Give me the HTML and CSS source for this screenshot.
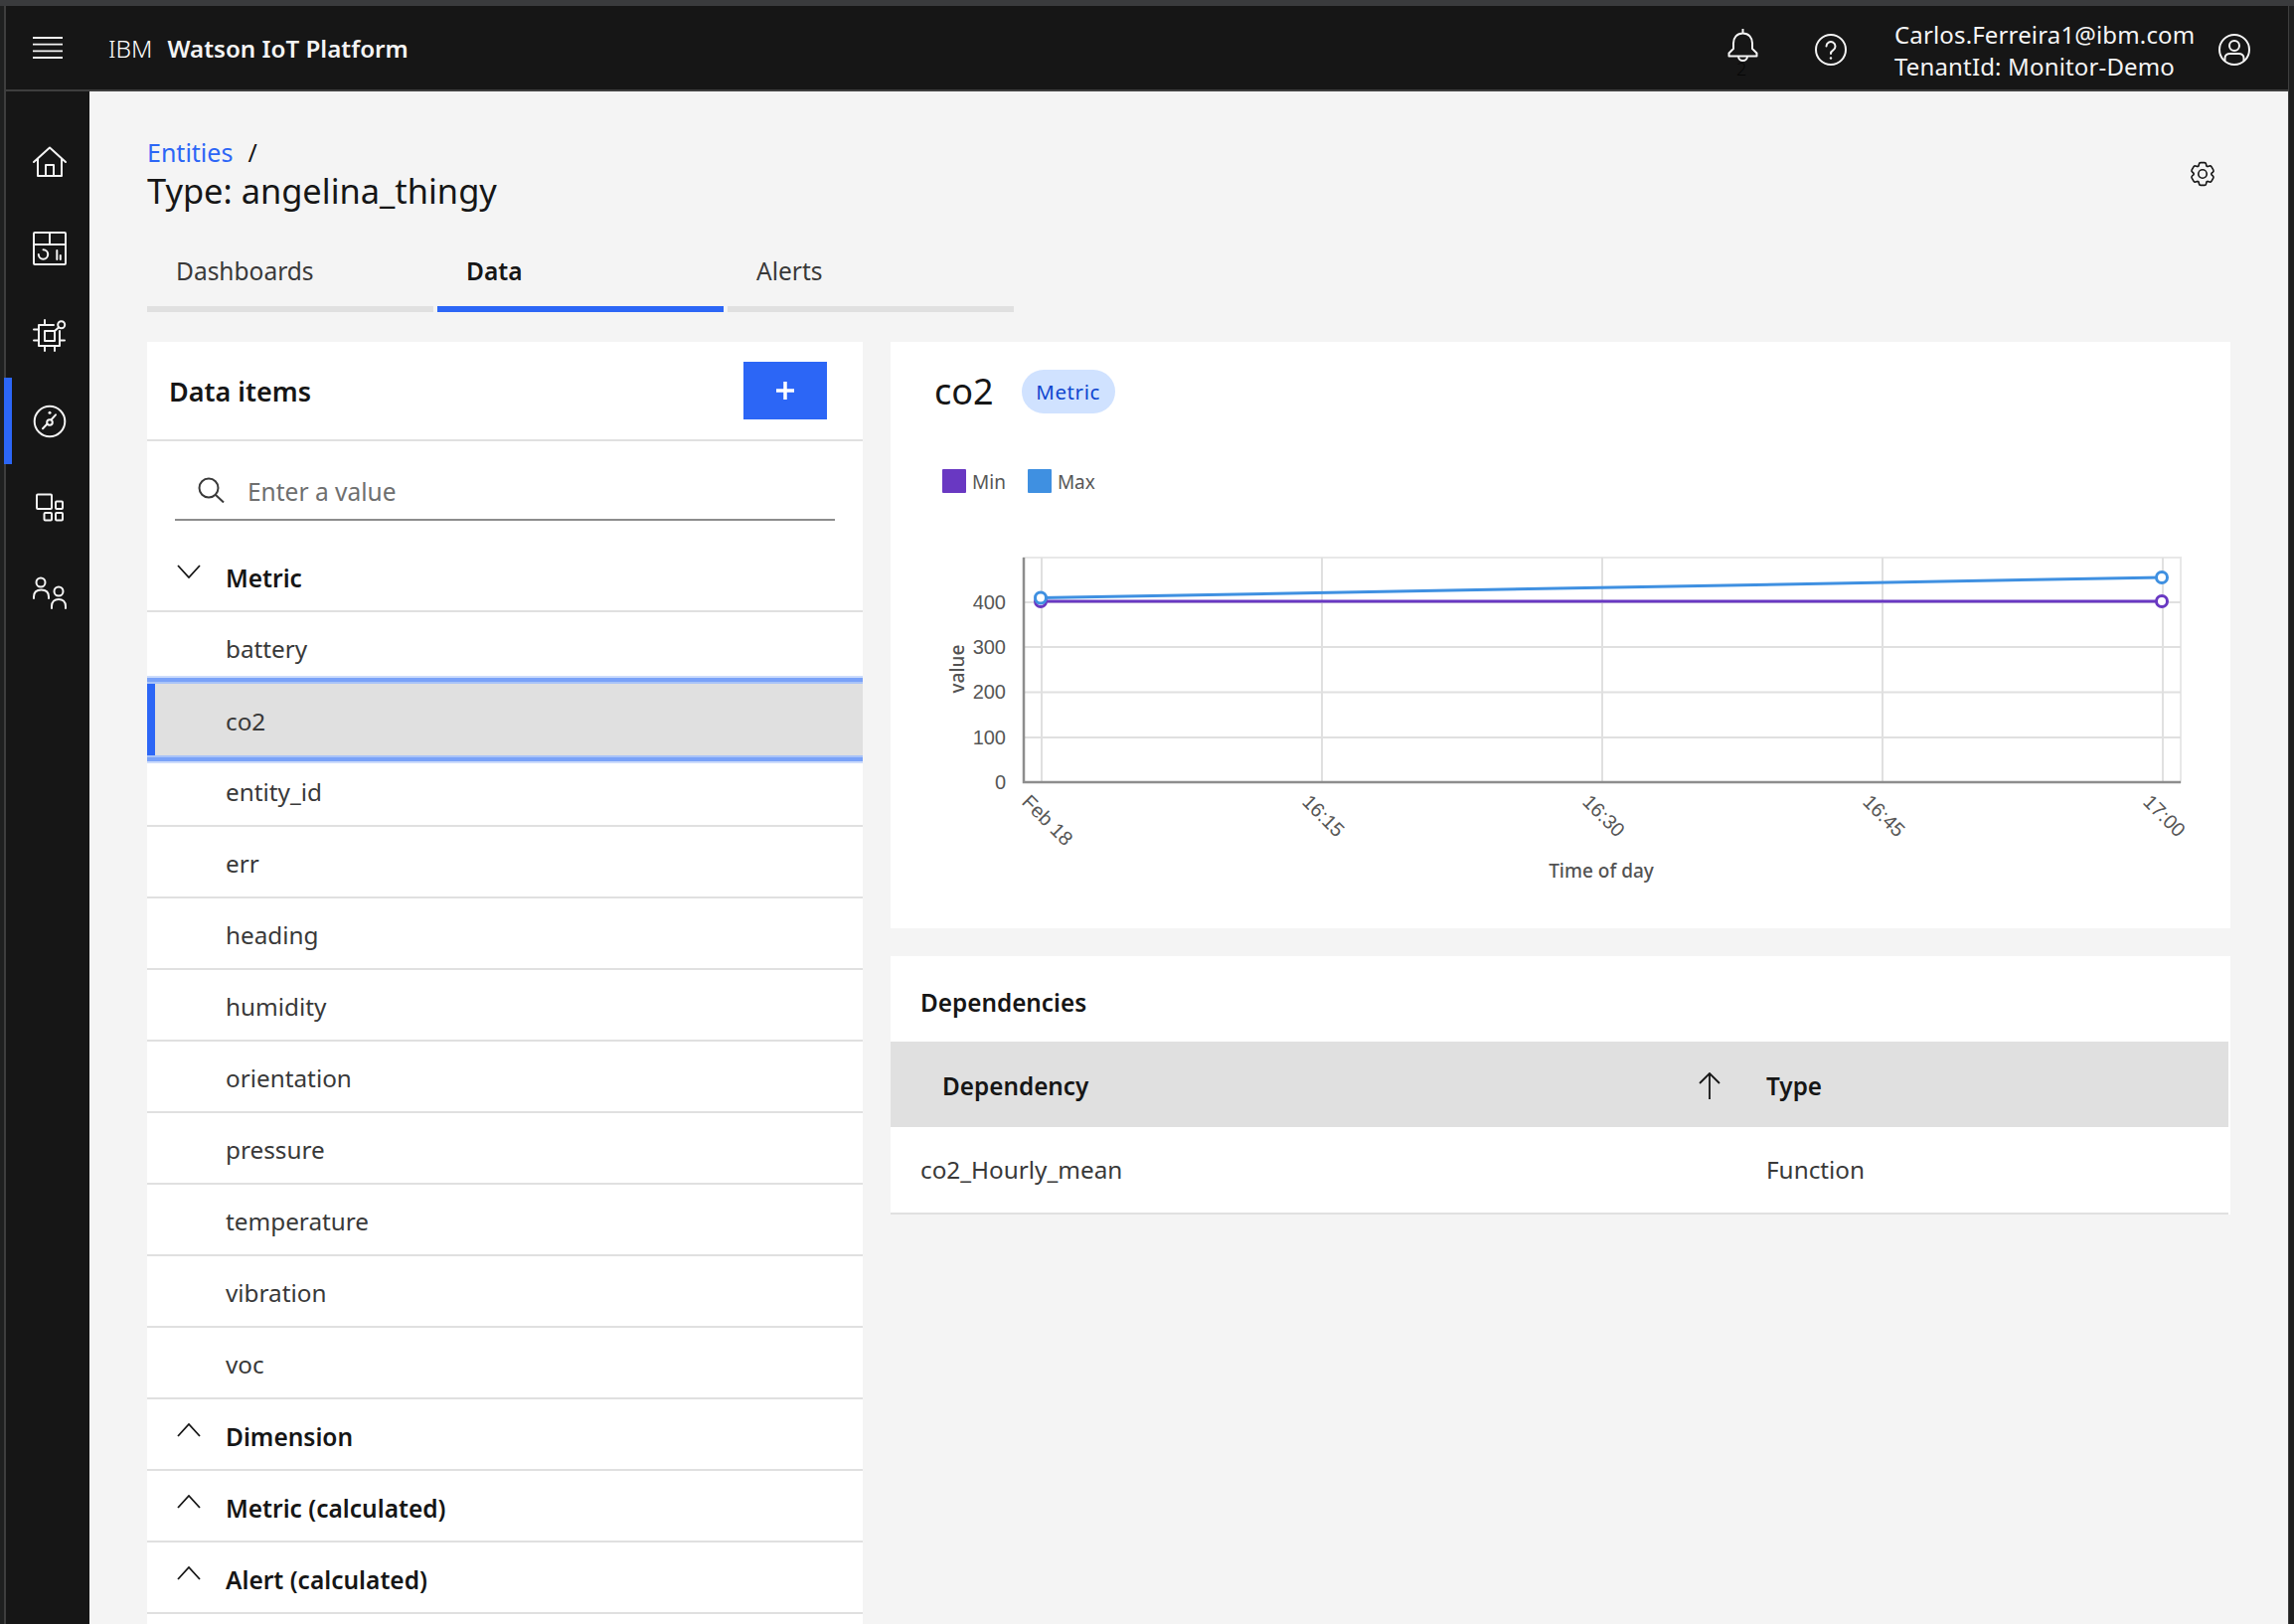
FILE: index.html
```html
<!DOCTYPE html>
<html lang="en">
<head>
<meta charset="utf-8">
<title>IBM Watson IoT Platform</title>
<link rel="stylesheet" href="styles.css">
</head>
<body>
<div class="top-strip"></div>
<div class="shell">
  <header class="header">
    <button class="hamburger" aria-label="Menu">
      <svg viewBox="0 0 30 22" width="30" height="22" class="ico thin"><path d="M0 1H30M0 7.7H30M0 14.3H30M0 21H30"/></svg>
    </button>
    <div class="brand"><span class="brand-ibm">IBM</span><span class="brand-name">Watson IoT Platform</span></div>
    <div class="header-right">
      <div class="bell">
        <svg viewBox="0 0 32 34" width="32" height="34" class="ico"><path d="M15.5 0.5V4.5M15.5 4.5C9.5 4.5 6 9 6 14.5V20L1.5 24.5V27.5H29.5V24.5L25 20V14.5C25 9 21.5 4.5 15.5 4.5ZM11 27.5A4.5 4.5 0 0 0 20 27.5"/></svg>
        <span class="bell-count">2</span>
      </div>
      <svg viewBox="0 0 32 32" width="32" height="32" class="ico help"><circle cx="16" cy="16" r="15"/><path d="M11.5 12.5A4.5 4.5 0 1 1 18.4 16.4C16.8 17.4 16 18.2 16 20"/><circle cx="16" cy="24.5" r="1.2" class="dot"/></svg>
      <div class="user-text"><div>Carlos.Ferreira1@ibm.com</div><div>TenantId: Monitor-Demo</div></div>
      <svg viewBox="0 0 32 32" width="32" height="32" class="ico avatar"><circle cx="16" cy="16" r="15"/><circle cx="16" cy="12" r="5"/><path d="M6.5 27V24.5C6.5 21.5 9 20 11.5 20H20.5C23 20 25.500 21.500 25.500 24.500V27"/></svg>
    </div>
  </header>
  <div class="body-row">
    <nav class="sidebar">
      <a class="nav-item"><svg viewBox="0 0 34 34" width="34" height="34" class="ico"><path d="M1 17L17 2.500L33 17M5 14V31H29V14M13 31V20H21V31"/></svg></a>
      <a class="nav-item"><svg viewBox="0 0 34 34" width="34" height="34" class="ico"><rect x="1" y="1" width="32" height="32" rx="1"/><path d="M1 13H33M17 1V13M10.500 18.300A4.700 4.700 0 1 1 5.800 23M24.300 19V28M27.800 24V28"/></svg></a>
      <a class="nav-item"><svg viewBox="0 0 34 34" width="34" height="34" class="ico chip"><path d="M21 6H6V27H27V12M12 12H22V22H12ZM1 10.500H6M1 21.500H6M12 1V6M12 27V32M22 27V32M27 21.500H32M22 12L26.200 8.200"/><circle cx="28.700" cy="5.700" r="3.500"/></svg></a>
      <a class="nav-item active"><svg viewBox="0 0 34 34" width="34" height="34" class="ico"><circle cx="17" cy="17" r="15.300"/><path d="M10 24.300L14.500 19.500M18.800 15L23 10.300"/><circle cx="17" cy="18" r="2.800"/><circle cx="17" cy="8.300" r="1.500" class="dot"/></svg></a>
      <a class="nav-item"><svg viewBox="0 0 34 34" width="34" height="34" class="ico"><rect x="4" y="3.500" width="15" height="14.500" rx="1"/><rect x="23" y="10.500" width="7" height="7.500" rx="1"/><rect x="11.500" y="22" width="7.500" height="7.500" rx="1"/><rect x="23" y="22" width="7" height="7.500" rx="1"/></svg></a>
      <a class="nav-item"><svg viewBox="0 0 34 34" width="34" height="34" class="ico users"><circle cx="8" cy="6" r="4.500"/><path d="M1 22V20.500C1 16 4 13.500 8.500 13.500C13 13.500 16 16 16 20.500V22"/><circle cx="26" cy="15" r="4.500"/><path d="M19 32V30C19 25.500 22 23 26 23C30 23 33 25.500 33 30V32"/></svg></a>
    </nav>
    <main class="content">
      <div class="page-head">
        <div>
          <div class="breadcrumb"><a class="crumb-link">Entities</a><span class="crumb-sep">/</span></div>
          <h1 class="page-title">Type: angelina_thingy</h1>
        </div>
        <svg viewBox="0 0 32 32" width="26" height="26" class="gear"><path d="M27 16.76V15.24l1.92-1.68A2 2 0 0 0 29.3 11l-2.36-4a2 2 0 0 0-1.73-1 2 2 0 0 0-.64.1l-2.43.82a11.35 11.35 0 0 0-1.31-.75l-.51-2.52a2 2 0 0 0-2-1.61h-4.68a2 2 0 0 0-2 1.61l-.51 2.52a11.48 11.48 0 0 0-1.32.75l-2.38-.86A2 2 0 0 0 6.79 6a2 2 0 0 0-1.73 1L2.7 11a2 2 0 0 0 .41 2.51L5 15.24v1.52l-1.89 1.68A2 2 0 0 0 2.7 21l2.36 4a2 2 0 0 0 1.73 1 2 2 0 0 0 .64-.1l2.43-.82a11.35 11.35 0 0 0 1.31.75l.51 2.52a2 2 0 0 0 2 1.61h4.72a2 2 0 0 0 2-1.61l.51-2.52a11.48 11.48 0 0 0 1.32-.75l2.42.82a2 2 0 0 0 .64.1 2 2 0 0 0 1.73-1l2.28-4a2 2 0 0 0-.41-2.51z"/><circle cx="16" cy="16" r="5.2"/></svg>
      </div>
      <div class="tabs">
        <a class="tab">Dashboards</a>
        <a class="tab selected">Data</a>
        <a class="tab">Alerts</a>
      </div>
      <div class="panels">
        <section class="items-panel">
          <div class="items-head">
            <h2 class="items-title">Data items</h2>
            <button class="add-btn" aria-label="Add"><svg viewBox="0 0 20 20" width="20" height="20" class="plus"><path d="M10 1V19M1 10H19"/></svg></button>
          </div>
          <div class="search-wrap">
            <div class="search">
              <svg viewBox="0 0 28 26" width="28" height="26" class="search-ico"><circle cx="11" cy="11" r="9.500"/><path d="M18 18L26 25.500"/></svg>
              <span class="placeholder">Enter a value</span>
            </div>
          </div>
          <ul class="tree">
            <li class="row group"><svg viewBox="0 0 24 14" width="24" height="14" class="chev"><path d="M1 1L12 13L23 1"/></svg><span>Metric</span></li>
            <li class="row">battery</li>
            <li class="row current">co2</li>
            <li class="row">entity_id</li>
            <li class="row">err</li>
            <li class="row">heading</li>
            <li class="row">humidity</li>
            <li class="row">orientation</li>
            <li class="row">pressure</li>
            <li class="row">temperature</li>
            <li class="row">vibration</li>
            <li class="row">voc</li>
            <li class="row group"><svg viewBox="0 0 24 14" width="24" height="14" class="chev"><path d="M1 13L12 1L23 13"/></svg><span>Dimension</span></li>
            <li class="row group"><svg viewBox="0 0 24 14" width="24" height="14" class="chev"><path d="M1 13L12 1L23 13"/></svg><span>Metric (calculated)</span></li>
            <li class="row group"><svg viewBox="0 0 24 14" width="24" height="14" class="chev"><path d="M1 13L12 1L23 13"/></svg><span>Alert (calculated)</span></li>
          </ul>
        </section>
        <div class="detail">
          <section class="chart-card">
            <div class="chart-head">
              <span class="chart-title">co2</span>
              <span class="tag">Metric</span>
            </div>
            <div class="legend">
              <span class="swatch min"></span><span class="legend-label">Min</span>
              <span class="swatch max"></span><span class="legend-label">Max</span>
            </div>
            <svg class="chart" viewBox="896 540 1348 394" width="1348" height="394">
              <rect x="1030" y="561" width="1164" height="226" class="frame"/>
              <path class="grid" d="M1030 606H2194M1030 651H2194M1030 696.500H2194M1030 742H2194M1048 561V787M1330 561V787M1612 561V787M1894 561V787M2176 561V787"/>
              <path class="axis" d="M1030 561V787H2194"/>
              <g class="ytick">
                <text x="1012" y="613">400</text>
                <text x="1012" y="658">300</text>
                <text x="1012" y="703">200</text>
                <text x="1012" y="749">100</text>
                <text x="1012" y="794">0</text>
              </g>
              <text class="axis-title" transform="translate(970,673) rotate(-90)">value</text>
              <g class="xtick">
                <text transform="translate(1027,808) rotate(45)">Feb 18</text>
                <text transform="translate(1309,808) rotate(45)">16:15</text>
                <text transform="translate(1591,808) rotate(45)">16:30</text>
                <text transform="translate(1873,808) rotate(45)">16:45</text>
                <text transform="translate(2155,808) rotate(45)">17:00</text>
              </g>
              <text class="axis-title" x="1611" y="883">Time of day</text>
              <path class="line-min" d="M1047 605H2175"/>
              <circle class="pt-min" cx="1047" cy="605" r="5.500"/>
              <circle class="pt-min" cx="2175" cy="605" r="5.500"/>
              <path class="line-max" d="M1047 601.500L2175 581"/>
              <circle class="pt-max" cx="1047" cy="601.500" r="5.500"/>
              <circle class="pt-max" cx="2175" cy="581" r="5.500"/>
            </svg>
          </section>
          <section class="deps-card">
            <h3 class="deps-title">Dependencies</h3>
            <table class="deps-table">
              <thead>
                <tr>
                  <th class="col-dep"><div class="th-inner"><span>Dependency</span><svg viewBox="0 0 22 28" width="22" height="28" class="sort"><path d="M11 27V1M1 11L11 1L21 11"/></svg></div></th>
                  <th class="col-type">Type</th>
                </tr>
              </thead>
              <tbody>
                <tr><td>co2_Hourly_mean</td><td>Function</td></tr>
              </tbody>
            </table>
          </section>
        </div>
      </div>
    </main>
  </div>
</div>
</body>
</html>
```
FILE: styles.css
```css
* { box-sizing: border-box; }
html, body { margin: 0; padding: 0; }
body {
  width: 2308px;
  height: 1634px;
  overflow: hidden;
  background: #1f2020;
  font-family: "Noto Sans", "Open Sans", sans-serif;
  color: #161616;
  display: flex;
  flex-direction: column;
}
.top-strip { height: 6px; flex: none; background: #3a3b3d; }
.shell {
  flex: 1;
  min-height: 0;
  margin: 0 6px 0 4px;
  display: flex;
  flex-direction: column;
  box-shadow: 1px 0 0 #3e3e3e;
}
.ico { fill: none; stroke: #f4f4f4; stroke-width: 2; stroke-linecap: round; stroke-linejoin: round; flex: none; display: block; }
.ico.thin { stroke-width: 1.8; stroke-linecap: butt; }
.ico .dot { fill: #f4f4f4; stroke: none; }
.ico.chip { margin-top: 2px; }
.ico.users { margin-top: -2px; }

/* header */
.header {
  height: 86px;
  flex: none;
  background: #161616;
  border-bottom: 2px solid #3e3e3e;
  box-shadow: inset 2px 0 0 #3e3e3e;
  display: flex;
  align-items: center;
  color: #f4f4f4;
}
.hamburger { background: none; border: 0; padding: 0; margin: 0 0 0 29px; display: block; }
.brand { margin-left: 46px; font-size: 24.500px; display: flex; align-items: baseline; }
.brand-ibm { font-weight: 300; margin-right: 15px; color: #fff; }
.brand-name { font-weight: 600; font-size: 24.200px; }
.header-right { margin-left: auto; display: flex; align-items: center; padding-right: 38px; }
.bell { position: relative; width: 32px; height: 34px; margin-top: -4px; }
.bell-count { position: absolute; left: 9px; top: 28px; font-size: 18px; color: #080808; font-weight: 300; }
.help { margin-left: 56px; margin-top: 4px; }
.avatar { margin-top: 4px; }
.user-text { margin-left: 48px; margin-right: 25px; margin-top: 6px; font-size: 24px; line-height: 32px; font-weight: 400; width: 301px; white-space: nowrap; letter-spacing: 0.15px; color: #f4f4f4; }

/* layout */
.body-row { flex: 1; min-height: 0; display: flex; }
.sidebar {
  width: 86px;
  flex: none;
  background: #161616;
  box-shadow: inset 2px 0 0 #3e3e3e;
  padding-top: 27px;
}
.nav-item { display: flex; align-items: center; height: 87px; padding-left: 21px; border-left: 8px solid transparent; }
.nav-item.active { border-left-color: #2c66f6; }
.content { flex: 1; min-width: 0; background: #f4f4f4; padding: 0 58px; display: flex; flex-direction: column; }

.page-head { display: flex; justify-content: space-between; align-items: flex-start; height: 122px; padding-top: 44px; }
.breadcrumb { font-size: 25px; line-height: 34px; display: flex; }
.crumb-link { color: #2c66f6; }
.crumb-sep { margin-left: 15px; color: #161616; }
.page-title { margin: 0; font-size: 34.400px; line-height: 44px; font-weight: 400; color: #161616; }
.gear { fill: none; stroke: #161616; stroke-width: 2; margin: 26px 15px 0 0; display: block; }

.tabs { display: flex; gap: 4px; height: 100px; flex: none; }
.tab { width: 288px; height: 100px; border-bottom: 6px solid #e0e0e0; padding: 42px 0 0 29px; font-size: 24.500px; line-height: 34px; color: #393939; }
.tab.selected { border-bottom-color: #2c66f6; color: #161616; font-weight: 600; }

.panels { flex: 1; min-height: 0; display: grid; grid-template-columns: 720px 1348px; gap: 28px; margin-top: 30px; }

/* data items */
.items-panel { background: #fff; overflow: hidden; }
.items-head { height: 100px; border-bottom: 2px solid #e0e0e0; display: flex; align-items: center; justify-content: space-between; padding: 0 36px 0 22px; }
.items-title { margin: 0; font-size: 27px; font-weight: 600; color: #161616; }
.add-btn { width: 84px; height: 58px; background: #2c66f6; border: 0; padding: 0; display: flex; align-items: center; justify-content: center; }
.plus { stroke: #fff; stroke-width: 3.500; fill: none; }
.search-wrap { padding: 20px 28px 0; height: 80px; }
.search { height: 60px; border-bottom: 2px solid #8d8d8d; display: flex; align-items: center; padding-left: 23px; }
.search-ico { fill: none; stroke: #393939; stroke-width: 2; }
.placeholder { margin-left: 22px; margin-top: 2px; font-size: 24.500px; color: #6f6f6f; }
.tree { list-style: none; margin: 20px 0 0; padding: 0; }
.row { height: 72px; border-bottom: 2px solid #e0e0e0; padding-left: 79px; padding-top: 2px; display: flex; align-items: center; font-size: 24.300px; color: #393939; position: relative; }
.row.group { font-weight: 600; color: #161616; padding-left: 30px; padding-top: 0; font-size: 24.500px; }
.row.group span { margin-left: 25px; margin-top: 4px; }
.chev { fill: none; stroke: #161616; stroke-width: 1.800; margin-top: -8px; flex: none; }
.row.current {
  background: #e0e0e0;
  border-bottom: 0;
  border-left: 8px solid #2c66f6;
  padding-left: 71px;
  z-index: 1;
  box-shadow: 0 -2px 0 #a9c3f8, 0 -6px 0 #7aa2f8, 0 -8px 0 #cddcfb, 0 2px 0 #a9c3f8, 0 6px 0 #7aa2f8, 0 8px 0 #cddcfb;
}

/* chart */
.detail { display: flex; flex-direction: column; gap: 28px; min-width: 0; }
.chart-card { background: #fff; height: 590px; flex: none; }
.chart-head { height: 100px; display: flex; align-items: center; padding-left: 44px; }
.chart-title { font-size: 36px; color: #161616; margin-top: -2px; }
.tag { margin-left: 28px; width: 94px; height: 44px; border-radius: 22px; background: #d0e2ff; color: #0f46cf; font-size: 20.500px; letter-spacing: 0.6px; display: flex; align-items: center; justify-content: center; }
.legend { margin-top: 28px; height: 24px; padding-left: 52px; display: flex; align-items: center; }
.swatch { width: 24px; height: 24px; border-radius: 1px; flex: none; }
.swatch.min { background: #6938c2; }
.swatch.max { background: #3f90e1; margin-left: 22px; }
.legend-label { margin-left: 6px; margin-top: 1px; font-size: 19px; color: #565656; }
.chart { display: block; margin-top: 44px; }
.frame { fill: #fff; stroke: #e8e8e8; stroke-width: 2; }
.grid { fill: none; stroke: #e0e0e0; stroke-width: 2; }
.axis { fill: none; stroke: #8d8d8d; stroke-width: 2.500; }
.ytick text { font-family: "Liberation Sans", Arial, sans-serif; font-size: 20px; fill: #565656; text-anchor: end; }
.xtick text { font-family: "Liberation Sans", Arial, sans-serif; font-size: 20px; fill: #565656; }
.axis-title { font-family: "Noto Sans", sans-serif; font-size: 19px; font-weight: 500; fill: #525252; text-anchor: middle; }
.line-min { fill: none; stroke: #6938c2; stroke-width: 3; }
.line-max { fill: none; stroke: #3f90e1; stroke-width: 3; }
.pt-min { fill: #fff; stroke: #6938c2; stroke-width: 3; }
.pt-max { fill: #fff; stroke: #3f90e1; stroke-width: 3; }

/* dependencies */
.deps-card { background: #fff; flex: none; height: 260px; }
.deps-title { margin: 0; height: 86px; padding: 6px 0 0 30px; display: flex; align-items: center; font-size: 24.300px; font-weight: 600; color: #161616; }
.deps-table { width: 1346px; border-collapse: collapse; table-layout: fixed; font-size: 24.300px; }
.col-dep { width: 851px; }
.deps-table th { height: 86px; background: #e0e0e0; text-align: left; font-weight: 600; color: #161616; padding: 2px 0 0 30px; }
.deps-table th.col-dep { padding: 2px 16px 0 52px; }
.th-inner { display: flex; align-items: center; justify-content: space-between; }
.sort { fill: none; stroke: #161616; stroke-width: 1.800; display: block; margin-top: 2px; }
.deps-table td { height: 87px; padding: 0 0 1px 30px; color: #393939; border-bottom: 2px solid #e0e0e0; }
```
